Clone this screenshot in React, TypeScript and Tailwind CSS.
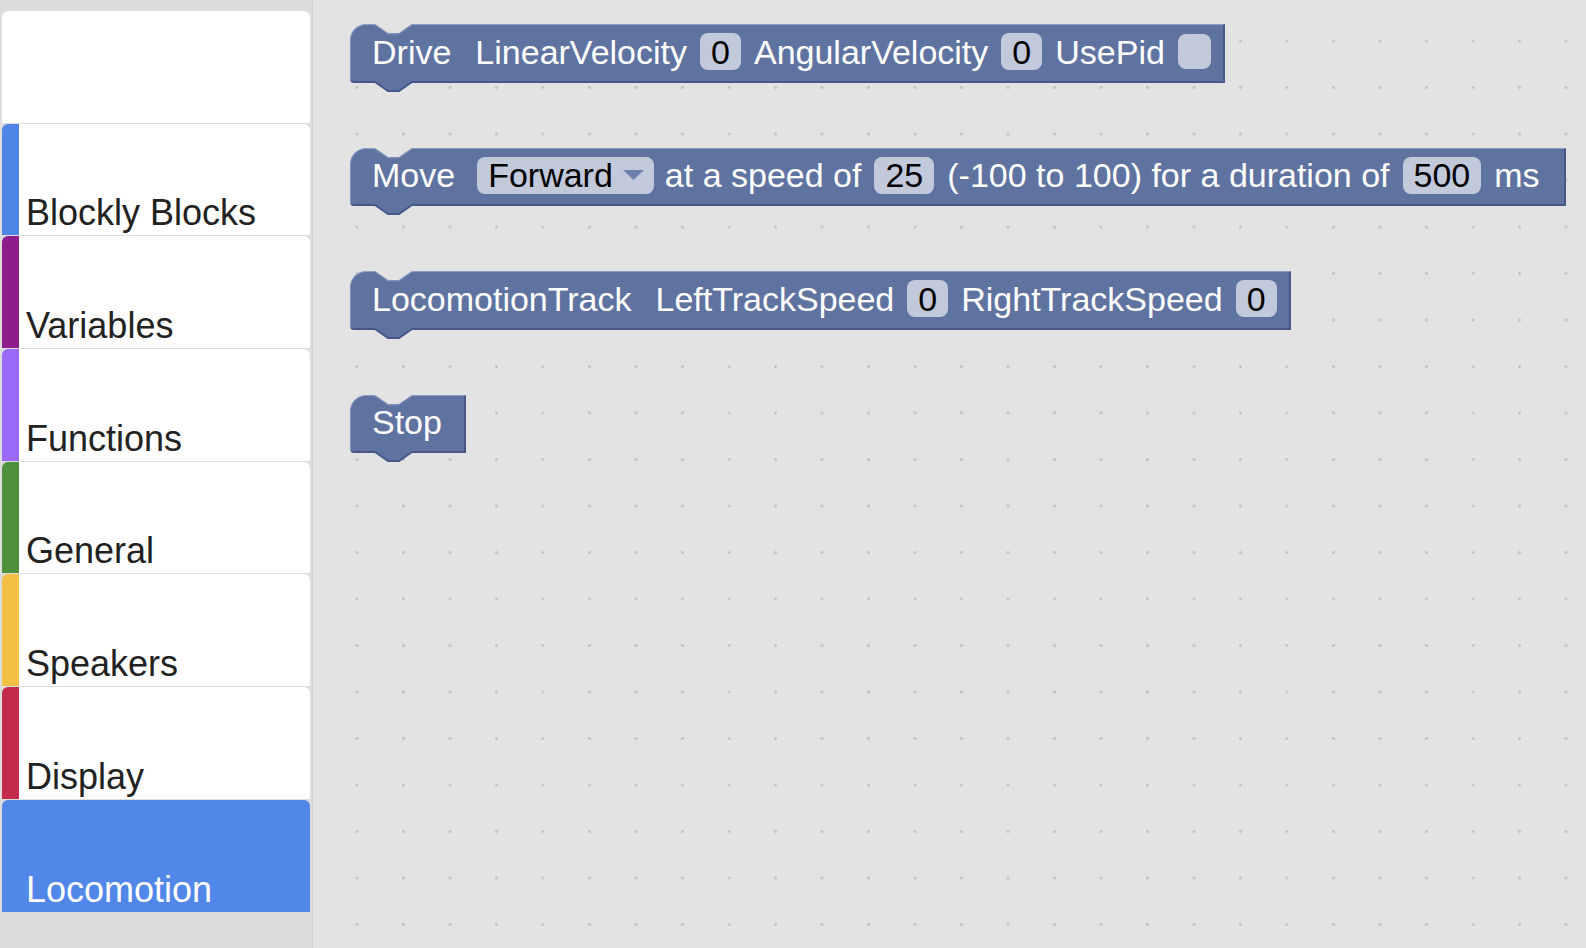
import type { ReactNode } from "react";

const FONT = "font-['Liberation_Sans',Arial,Helvetica,sans-serif]";

interface Category {
  name: string;
  bar: string;
  selected?: boolean;
}

const categories: Category[] = [
  { name: "", bar: "border-l-white" },
  { name: "Blockly Blocks", bar: "border-l-[#5085e8]" },
  { name: "Variables", bar: "border-l-[#8f1c8b]" },
  { name: "Functions", bar: "border-l-[#9a69f7]" },
  { name: "General", bar: "border-l-[#4f903d]" },
  { name: "Speakers", bar: "border-l-[#f4bf45]" },
  { name: "Display", bar: "border-l-[#c42b4b]" },
  { name: "Locomotion", bar: "border-l-[#5187e9]", selected: true },
];

function Field({ value }: { value: string }) {
  return (
    <div className="flex h-[37px] items-center rounded-[8px] bg-[#c1c9db] px-[11px] text-black">
      {value}
    </div>
  );
}

function Checkbox() {
  return <div className="h-[35px] w-[33px] rounded-[8px] bg-[#c1c9db]" />;
}

function Dropdown({ value }: { value: string }) {
  return (
    <div className="-ml-[2px] mr-[-2px] flex h-[37px] items-center gap-[10px] rounded-[8px] bg-[#c1c9db] pl-[11px] pr-[10px] text-black">
      <span>{value}</span>
      <svg width="21" height="11" viewBox="0 0 21 11">
        <polygon points="0,0 21,0 10.5,10" fill="#6d80ad" />
      </svg>
    </div>
  );
}

function Label({ text, first }: { text: string; first?: boolean }) {
  return <span className={first ? "mr-[11px] whitespace-pre" : "whitespace-pre"}>{text}</span>;
}

function Block({ children, pad }: { children: ReactNode; pad: string }) {
  return (
    <div
      className={`relative flex h-[58.5px] items-center gap-[13px] rounded-tl-[16px] rounded-bl-[4px] border-t border-l border-b-2 border-r-2 border-t-[#8c9cc4] border-l-[#8192bb] border-b-[#48578a] border-r-[#48578a] bg-[#5f73a1] pb-[2px] pl-[21px] ${pad} text-[34px] leading-none text-white`}
    >
      {/* notch on top */}
      <svg className="absolute left-[24px] top-[-1px]" width="38" height="12" viewBox="0 0 38 12">
        <polygon points="0,0 13,9 24,9 37,0" fill="#e3e3e3" />
        <polyline points="0,0.8 13,9.8 24,9.8 37,0.8" fill="none" stroke="#8c9cc4" strokeWidth="1" />
      </svg>
      {children}
      {/* tab below */}
      <svg className="absolute left-[24px] top-[calc(100%-1px)] overflow-visible" width="38" height="13" viewBox="0 0 38 13">
        <polygon points="0,0 37,0 37,2 24,11 13,11 0,2" fill="#5f73a1" />
        <polyline points="0,2 13,11 24,11 37,2" fill="none" stroke="#48578a" strokeWidth="2" />
      </svg>
    </div>
  );
}

export default function App() {
  return (
    <div className={`flex h-screen w-full overflow-hidden ${FONT}`}>
      <div className="flex w-[312px] shrink-0 flex-col gap-px bg-[#dddddd] px-[2px] pt-[11px]">
        {categories.map((c, i) => (
          <div
            key={i}
            className={`flex h-[111.7px] shrink-0 items-end rounded-t-[6px] border-l-[17px] pb-[2px] pl-[7px] text-[36px] leading-[41px] ${c.bar} ${
              c.selected ? "bg-[#5187e9] text-white" : "bg-white text-[#222222]"
            }`}
          >
            {c.name}
          </div>
        ))}
      </div>
      <div className="w-px shrink-0 bg-[#d3d3d3]" />
      <div className="flex flex-1 flex-col items-start gap-[65px] bg-[#e3e3e3] bg-[radial-gradient(circle_at_44px_41px,#c3c3c3_1.2px,transparent_1.7px)] bg-size-[46.5px_46.5px] pl-[37px] pt-[24px]">
        <Block pad="pr-[12px]">
          <Label text="Drive" first />
          <Label text="LinearVelocity" />
          <Field value="0" />
          <Label text="AngularVelocity" />
          <Field value="0" />
          <Label text="UsePid" />
          <Checkbox />
        </Block>
        <Block pad="pr-[24px]">
          <Label text="Move" first />
          <Dropdown value="Forward" />
          <Label text="at a speed of" />
          <Field value="25" />
          <Label text="(-100 to 100) for a duration of" />
          <Field value="500" />
          <Label text="ms" />
        </Block>
        <Block pad="pr-[12px]">
          <Label text="LocomotionTrack" first />
          <Label text="LeftTrackSpeed" />
          <Field value="0" />
          <Label text="RightTrackSpeed" />
          <Field value="0" />
        </Block>
        <Block pad="pr-[22px]">
          <Label text="Stop" />
        </Block>
      </div>
    </div>
  );
}
